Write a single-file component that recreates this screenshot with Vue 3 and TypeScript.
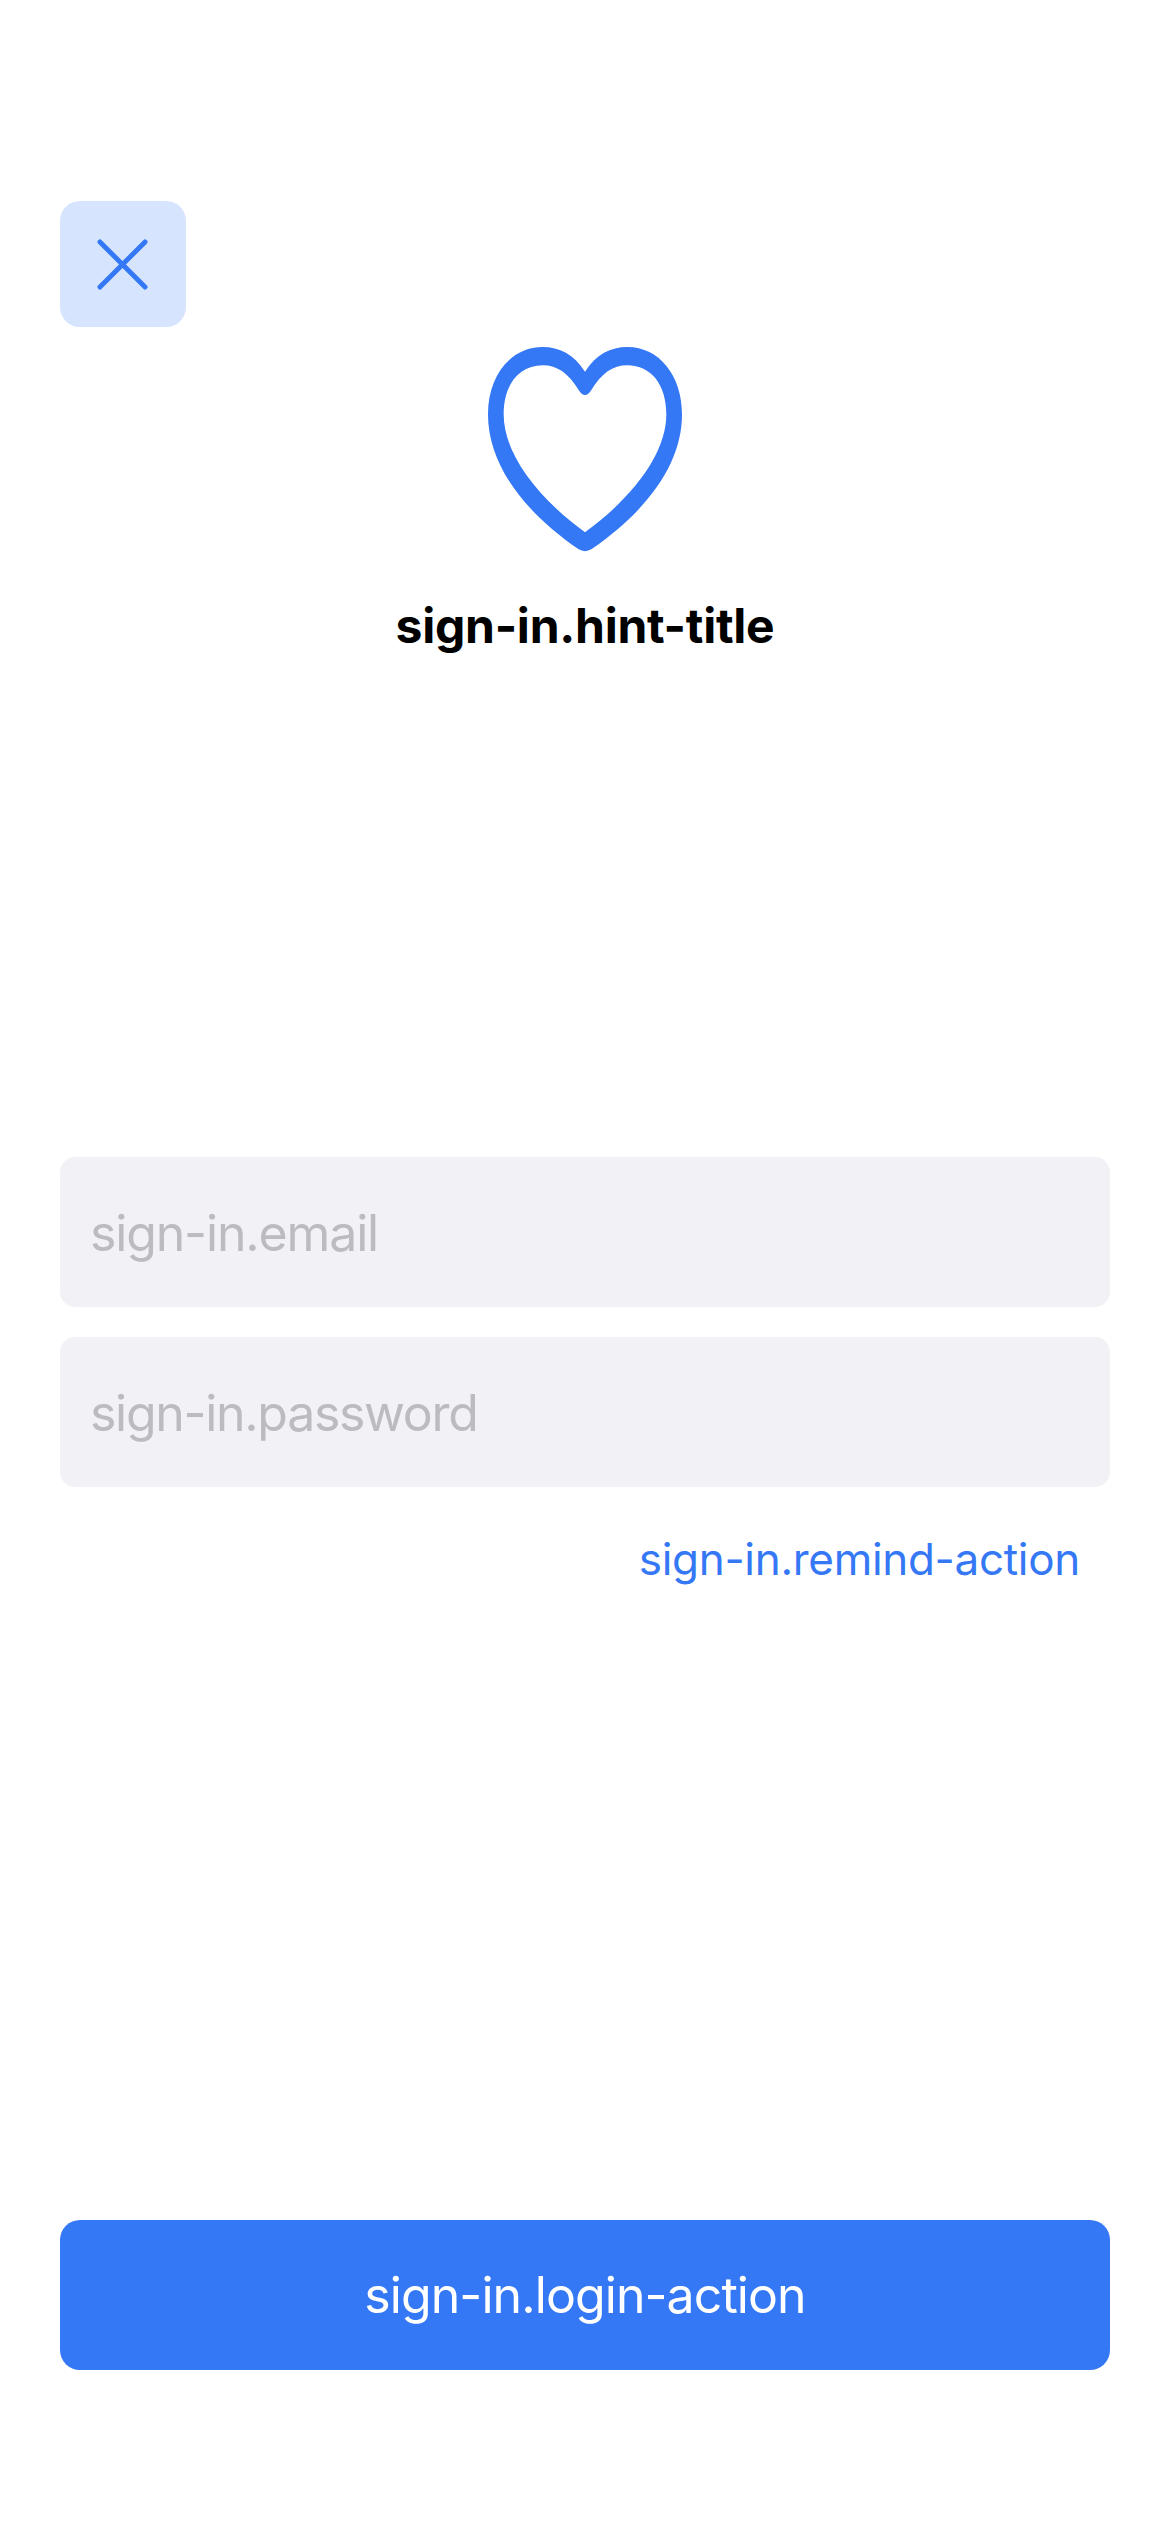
<script setup lang="ts">
interface Field {
  id: string
  label: string
}

const fields: Field[] = [
  { id: 'email', label: 'sign-in.email' },
  { id: 'password', label: 'sign-in.password' },
]
</script>

<template>
  <main class="screen">
    <button class="close" type="button" aria-label="Close">
      <svg viewBox="0 0 52 52" fill="none" stroke="currentColor" stroke-width="5" stroke-linecap="round">
        <path d="M3 3 49 49M49 3 3 49" />
      </svg>
    </button>

    <header class="hero">
      <svg class="heart" viewBox="54 50 582 615" fill="currentColor" fill-rule="evenodd">
        <path
          d="M345 124C312 72 268 50 218 50C122 50 54 136 54 252C54 398 154 538 326 657Q345 668 364 657C536 538 636 398 636 252C636 136 568 50 472 50C422 50 378 72 345 124Z
             M345 606C190 492 101 363 101 252C101 163 147 105 218 105C262 105 295 128 328 182Q336 194 345 194Q354 194 362 182C395 128 428 105 472 105C543 105 589 163 589 252C589 363 500 492 345 606Z"
        />
      </svg>
      <h1 class="title">sign-in.hint-title</h1>
    </header>

    <form class="form">
      <label v-for="field in fields" :key="field.id" class="field">
        <span :class="field.id">{{ field.label }}</span>
      </label>
      <a class="remind">sign-in.remind-action</a>
    </form>

    <button class="login" type="button">sign-in.login-action</button>
  </main>
</template>

<style>
body {
  margin: 0;
  background: #fff;
}
</style>

<style scoped>
.screen {
  box-sizing: border-box;
  display: flex;
  flex-direction: column;
  width: 1170px;
  height: 2532px;
  padding: 201px 60px 162px;
  background: #fff;
  color: #3478f6;
  font-family: Inter, "Liberation Sans", sans-serif;
}

button {
  padding: 0;
  border: 0;
  font: inherit;
}

.close {
  display: flex;
  align-items: center;
  justify-content: center;
  width: 126px;
  height: 126px;
  border-radius: 20px;
  background: #d6e5fd;
  color: #3478f6;
}

.close svg {
  width: 51px;
  height: 51px;
  margin-right: 1px;
}

.hero {
  display: flex;
  flex-direction: column;
  align-items: center;
  height: 810px;
  padding-top: 20px;
}

.heart {
  width: 194px;
  height: 205px;
}

.title {
  margin: 44px 0 0;
  color: #000;
  font-size: 48px;
  font-weight: 700;
  line-height: 60px;
  letter-spacing: -0.25px;
}

.form {
  display: flex;
  flex-direction: column;
  gap: 30px;
}

.field {
  box-sizing: border-box;
  display: flex;
  align-items: center;
  height: 150px;
  padding: 2px 30px 0;
  border-radius: 15px;
  background: #f2f1f6;
  color: #bcbbc0;
  font-size: 50px;
  line-height: 60px;
}

.email {
  letter-spacing: -1.15px;
}

.password {
  letter-spacing: -1.3px;
}

.remind {
  align-self: flex-end;
  margin: 15px 30px 0 0;
  font-size: 44px;
  line-height: 54px;
  letter-spacing: -0.3px;
}

.login {
  height: 150px;
  margin-top: auto;
  border-radius: 20px;
  background: #3478f6;
  color: #fff;
  font-size: 50px;
  letter-spacing: -0.92px;
}
</style>
